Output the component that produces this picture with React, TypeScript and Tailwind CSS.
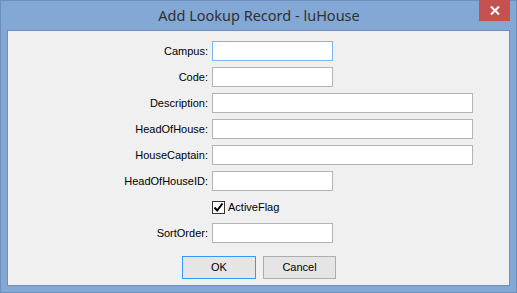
import React from 'react';

const fields: { label: string; wide: boolean }[] = [
  { label: 'Campus:', wide: false },
  { label: 'Code:', wide: false },
  { label: 'Description:', wide: true },
  { label: 'HeadOfHouse:', wide: true },
  { label: 'HouseCaptain:', wide: true },
  { label: 'HeadOfHouseID:', wide: false },
];

const TextBox = ({ wide, focused }: { wide: boolean; focused?: boolean }) => (
  <div
    className={`h-[20px] bg-white border ${focused ? 'border-[#7eb4ea]' : 'border-[#b4b4b4]'} ${
      wide ? 'w-[261px]' : 'w-[121px]'
    }`}
  />
);

export default function App() {
  return (
    <div className="w-[517px] h-[293px] bg-[#83a8d6] border border-[#6e8fba] flex flex-col px-[6px] pb-[6px] font-['Liberation_Sans',Arial,sans-serif]">
      {/* Title bar */}
      <div className="h-[29px] flex items-start relative">
        <div className="flex-1 text-center text-[14.5px] leading-[29px] text-[#303030] pl-[1px] font-['Noto_Sans',sans-serif]">
          Add Lookup Record - luHouse
        </div>
        <div className="absolute right-[0px] top-[-1px] w-[31px] h-[21px] bg-[#c75050] flex items-center justify-center">
          <svg width="10" height="9" viewBox="0 0 10 9">
            <path d="M1 0.5 L9 8.5 M9 0.5 L1 8.5" stroke="#fff" strokeWidth="2" />
          </svg>
        </div>
      </div>

      {/* Client area */}
      <div className="flex-1 bg-[#f0f0f0] border border-[#6e8fba] pt-[10px] text-[11px] text-black">
        <div className="grid grid-cols-[200px_auto] gap-x-[4px] gap-y-[6px] auto-rows-[20px]">
          {fields.map((f, i) => (
            <React.Fragment key={f.label}>
              <div className="flex items-center justify-end">{f.label}</div>
              <TextBox wide={f.wide} focused={i === 0} />
            </React.Fragment>
          ))}

          <div />
          <div className="flex items-center gap-[3px]">
            <div className="w-[13px] h-[13px] bg-white border border-[#333] flex items-center justify-center">
              <svg width="11" height="11" viewBox="0 0 11 11">
                <path d="M1.5 5.5 L4.2 8.5 L9.5 1.5" stroke="#000" strokeWidth="2" fill="none" />
              </svg>
            </div>
            <span>ActiveFlag</span>
          </div>

          <div className="flex items-center justify-end">SortOrder:</div>
          <TextBox wide={false} />
        </div>

        {/* Buttons */}
        <div className="flex gap-[7px] pl-[174px] pt-[13px]">
          <button className="w-[74px] h-[23px] bg-[#e5e5e5] border border-[#3399ff] text-[11px]">OK</button>
          <button className="w-[73px] h-[23px] bg-[#e5e5e5] border border-[#adadad] text-[11px]">Cancel</button>
        </div>
      </div>
    </div>
  );
}
